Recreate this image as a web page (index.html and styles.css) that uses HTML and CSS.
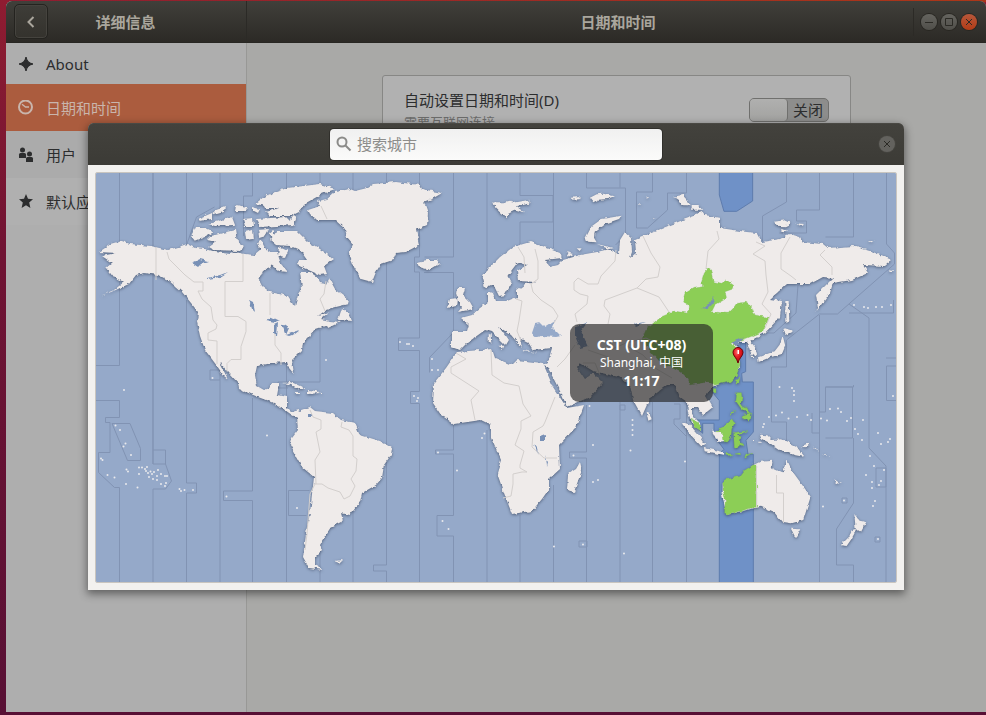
FILE: index.html
```html
<!DOCTYPE html>
<html lang="zh-CN">
<head>
<meta charset="utf-8">
<title>日期和时间</title>
<link rel="stylesheet" href="styles.css">
</head>
<body>
<main class="window">
  <aside class="side">
    <header class="bar side-bar">
      <button class="back" type="button" aria-label="返回"><svg width="12" height="14" viewBox="0 0 10 14"><path d="M7.500 2 2.500 7l5 5" fill="none" stroke="currentColor" stroke-width="2"/></svg></button>
      <h2>详细信息</h2>
    </header>
    <nav class="nav">
      <a href="#about"><svg viewBox="0 0 16 16"><path d="M8 1C9 5 11 7 15 8c-4 1-6 3-7 7-1-4-3-6-7-7 4-1 6-3 7-7z" fill="currentColor" stroke="currentColor"/></svg>About</a>
      <a href="#date" class="active"><svg viewBox="0 0 16 16"><circle cx="7.500" cy="7" r="6.500" fill="none" stroke="currentColor" stroke-width="2"/><path d="M4 4.300 7.500 7H11" fill="none" stroke="currentColor" stroke-width="1.400"/></svg>日期和时间</a>
      <a href="#users"><svg viewBox="0 0 16 16"><g fill="currentColor"><circle cx="4.500" cy="3" r="2.500"/><path d="M1 7.500q0-1.500 1.500-1.500h4Q8 6 8 7.500V11H1z"/><circle cx="11.500" cy="7" r="2.500"/><path d="M8 11.500Q8 10 9.500 10h4q1.500 0 1.500 1.500V15H8z"/></g></svg>用户</a>
      <a href="#apps"><svg viewBox="0 0 16 16"><path d="m8 0 2 4.800 5 .4-3.800 3.300L12.400 14 8 11.200 3.600 14l1.200-5.500L1 5.200l5-.4z" fill="currentColor"/></svg>默认应用程序</a>
    </nav>
  </aside>
  <section class="content">
    <header class="bar main-bar">
      <h1>日期和时间</h1>
      <div class="controls">
        <button type="button" aria-label="最小化"><svg viewBox="0 0 16 16"><path d="M4 8.500h8"/></svg></button>
        <button type="button" aria-label="最大化"><svg viewBox="0 0 16 16"><path d="M4.500 4.500h7v7h-7z"/></svg></button>
        <button type="button" class="red" aria-label="关闭窗口"><svg viewBox="0 0 16 16"><path d="m5 5 6 6m0-6-6 6"/></svg></button>
      </div>
    </header>
    <div class="card">
      <div><p class="label">自动设置日期和时间(D)</p><p class="hint">需要互联网连接</p></div>
      <button class="switch" type="button" role="switch" aria-checked="false"><span class="knob"></span><span class="state">关闭</span></button>
    </div>
  </section>
</main>

<div class="overlay">
<div class="dialog" role="dialog" aria-label="时区">
  <header class="dialog-bar">
    <label class="search"><svg width="16" height="16" viewBox="0 0 16 16"><circle cx="6" cy="6" r="4.500"/><path d="m9.500 9.500 5 5"/></svg><input type="text" placeholder="搜索城市" aria-label="搜索城市"></label>
    <button class="close" type="button" aria-label="关闭"><svg viewBox="0 0 16 16"><path d="m5 5 6 6m0-6-6 6"/></svg></button>
  </header>
  <div class="dialog-body">
  <div class="map">
<svg viewBox="96 173 800 409" role="img" aria-label="世界时区地图">
<defs>
  <filter id="coast" x="96" y="173" width="800" height="409" filterUnits="userSpaceOnUse" color-interpolation-filters="sRGB">
    <feTurbulence type="fractalNoise" baseFrequency=".2" numOctaves="2" seed="4" result="n"/>
    <feDisplacementMap in="SourceGraphic" in2="n" scale="4" xChannelSelector="R" yChannelSelector="G" result="d"/>
    <feDropShadow in="d" dx="0" dy="1" stdDeviation="1.800" flood-color="#34415a" flood-opacity=".7"/>
  </filter>
  <radialGradient id="pin" cx=".4" cy=".3" r=".8"><stop offset="0" stop-color="#ff6a6a"/><stop offset=".4" stop-color="#e31b22"/><stop offset="1" stop-color="#a40008"/></radialGradient>
</defs>
<rect class="sea" x="96" y="173" width="800" height="409"/>
<!-- highlighted zone -->
<g transform="translate(560 165) scale(.3333)" class="zone"><path d="M478 22V90l14 49h38l48-31V22z"/></g>
<g transform="translate(600 310) scale(.3333)" class="zone"><path d="M395 90h42v95l-12 5 2 26h33v150l-22 25 6 42h16v387H358V432l14-14-30-40v-38h-34v30l-40-40h90v-58l-18-22v-30l55-50z"/></g>
<!-- zone boundaries over water -->
<g class="lines">
  <path d="M119.500 173v192.500H96M96 400.500h23.500v17h-14v5h4.500v30H98.500v20l16 15h5V582M112 423.500h18l10.500 25v12h-13zM153 173v277h12.500v14H153zM153 464v-14M165.500 464l6 17-6 8H153v93M186.500 173v72l10-28 18-10M186.500 300v183h10v10h-10v89M220 173v38M210 370h10v212M210 370v10h10M252.500 173v23h-9v40M252.500 398v93h-29v9.500h29V582M286.500 173v24M286.500 360v222M320 173v10M320 330v52h-42v6h10M320 545v37M353 173v20M353 250v262V582M386.500 173v392h-13v6h13v11M419.500 173v84h-5v15h5v66h-21v12.500h21v41h-9v12h9V582M453.500 173v84h-29M424 272.500h29.500v60l-24 25v15M453.500 424v26h-18v4h18v61.500H437v20.500h16.500v46M487 173v110M487 430v152M520 173v22.500h33V222h-33v25M520 515v67M553.500 173v75M553.500 485v97M586.500 173v15h39v47l-10 10M586.500 405v47h-17v6h17V582M620 173v14.500M620 402v180M652.500 173v19h-16v36h11l20-18v-17h19v-20M652.500 402v180M686.500 402v180M620 405h5v5h-5zM674 404h6v15h-6v5l12 12M786.500 173v29l-24 14v25M819.500 173v37h-23v11h10v12h-27M853.500 173v64h-28M886.500 173v71l8 9v11l-57 50h-18l-33 26v27h-15v55h15v30M765 333h9l22-20 2-28M819.500 315v267M849 304l20 14v130l17 18v116M893.500 300v13H849M819.500 433v-21h6v-25h28v-2M819.500 433H812v-20M825.500 387h27v51h-27M886 358h10M853.500 438v65l-17 26v36h17v17M876 468h10v19h-10zM288.500 490.500h21M288.500 490.500v25h18"/>
  <path d="M579 541h8v6h-8zM842 498h5v5h-5zM875 537h5v5h-5zM896 366h-9.500v34.500h9.500"/>
</g>
<g filter="url(#coast)">
<g class="land">
  <!-- North and Central America -->
  <path d="M99 252l6-4 6-4 11-3 8 3 21 2 17 4 10-3 9-3 8 4 10 1 10 3 15 2 5-2 10 2 10 1 6-5-3-7 3-3 4 8 8 6 2 6-5 8-7 3-4 9 3 6 8 6 18 4 4 6 3 4 3-11 4-6-2-17 10 0 7 5 3 6 6 1 3-6 6 11 8 6 6 5-1 4-12 3-10 3-8 6 11-4-8 7 9 2 10 1-12 6-3-2-9 3-7 8-6 6-1 7-10 10 2 14-5-6-2-6-16 1-14 3-2 9 2 11 7 4 6-2 2-5 7 0-2 12 10 2v10l5 5 7-2 3 6-3 3-7-4-10-7-11-6-13-5-19-8-1-6-19-21 9 17-4-3-7-10-12-16-5-14-3-14 1-10-7-9-9-11-14-12-10-5-14-2-8 2-7 9-18 8-11 4 14-6 10-8-11-5-7-9 6-5-10-7 14-3z"/>
  <!-- Arctic archipelago -->
  <path d="M335 189l-13 5-16 9-8 9-8 4h-20l-4-4 13-4-24-4 10-8 22-8 33-4zM195 228h11l8 4-9 5-10 4-4-5zM211 236l16-4 9-2 2 12 7 5-4 4-27-1-5-3 7-5-9-2zM198 219l14-6v6l-12 2zM208 224l14-4 10-3 3 8-20 1zM216 210l9-3-1 4-14 4zM236 206l12 2-3 3-10 0zM252 207l8 2-2 4-6-3zM243 219l10-1 1 8-9 0zM245 232l8-2 1 9-8 1zM256 219l30-2 8 8-34 2zM292 216l5 1-3 7-5-1zM258 230l11-1-3 6-7 2zM270 233l4-3v13l-2-2zM277 231h20l10 10 13 8 14 10-10 7 3 8-7 1-14-6-9-4 2-5h8l-7-10-10-4-14-1-6-5zM279 247l9 4-3 7-7-2zM270 252l7 0 4 12 7 8-9-1-8-6-6-7zM300 196l24-5-15 8zM262 202l20 0 3 6-20 0z"/>
  <!-- Greenland and the North Atlantic -->
  <path d="M335 192l15-3 5 2 12-3 6-4 23-2 24 3 2 4 20 4-10 6-8 3 4 11-1 12-11 5 3 15-13 7-10 1-3 7-12 4-5 8-4 10-11-3-7-12-5-13 4-10-6-7-2-8-10-9h-18l-7-6-2-4 12-4-3-5 10-2zM342 308l7 6 3 7-14-1zM417 262l10-2h10l3 4-10 6-11-3zM457 288l8 0-2 7 7 7 4 7-16 3 4-5-4-6-2-7zM450 299l7-1-1 8-8 2z"/>
  <!-- Cuba, Hispaniola -->
  <path d="M283 383l8-1 9 4 6 3-6 0-9-4zM308 390l8 1 4 2-12 1zM296 392h5v2h-5zM320 393h4v1h-4z"/>
  <!-- South America -->
  <path d="M297 417l4-7 9-3 5 4 18 2 8 7 14 3 5 12 20 6 12 7-1 7-7 10-2 13-6 7-14 8-2 9-10 13-9-2 2 8-12 6-6 9-5 8 2 6-7 7v8l9 5-15-2-6-11 3-24 4-20 4-36-12-10-12-22 2-7 6-8z"/>
  <path d="M334 561l8-1-3 3z"/>
  <!-- Eurasia -->
  <path d="M451 332L467 332 469 325 461 318 472 315 480 308 488 302 488 291 493 293 496 301 507 301 517 297 517 290 525 284 536 282 518 281 517 271 527 265 518 262 508 275 512 283 505 295 499 296 493 284 485 288 482 278 485 272 500 257 513 247 530 242 547 248 560 253 562 258 545 260 550 267 558 265 563 260 570 258 580 255 597 252 613 248 597 244 613 251 619 253 620 240 625 232 631 237 632 252 630 258 636 253 635 240 642 237 663 228 683 220 700 214 720 218 720 228 747 232 757 233 762 242 780 239 790 234 800 237 803 242 823 244 828 248 853 246 873 252 892 260 885 266 863 265 868 273 852 280 833 283 830 293 818 309 816 295 833 278 823 277 810 284 787 284 770 299 782 301 780 317 765 333 750 341 755 347 757 354 752 356 747 342 732 342 737 347 740 362 740 368 732 378 713 387 706 395 713 407 703 415 697 407 692 407 692 415 700 423 701 431 693 425 688 413 687 402 680 397 675 385 667 385 650 398 642 416 633 400 630 385 619 377 610 375 593 371 580 363 577 367 585 379 593 373 603 383 590 397 567 407 562 395 548 368 542 365 548 362 552 348 533 350 528 342 520 338 522 348 511 335 499 327 508 340 505 345 492 332 485 330 467 343 460 350 451 347z"/>
  <!-- Africa -->
  <path d="M457 352l35-3 3 9 17 7 5-5 26 3 10 24 14 21 17-3-8 22-17 18 1 24-11 10v10l-7 10-10 12-20 3-8-21-7-20 4-13-10-23v-12l-10-5-27 4-13-9-8-12 1-20 12-15zM580 462l2 8-8 22-7-2 1-16 8-5z"/>
</g>
<g transform="translate(430 165) scale(.3333)" class="land">
  <path d="M190 112l30 0 20-5 20 5 38-8v12l-40 8 25 18-30-8-15 8-8 18-22-20-12-12zM422 98l20-2 12 6-28 2zM480 98l20-10 20-2 35 8-20 8-30 2-15 8zM465 222l20-38 30-22 60-10-8 10-45 16-28 22-2 18 8 14-25-2zM205 542l18 0-4 10zM176 508l6 0 2 30-8-4zM275 555l50 8-46-4zM440 250l15 0-6 8zM410 262l20 5-14 8z"/>
</g>
<g transform="translate(560 165) scale(.3333)" class="land">
  <path d="M340 95l30-6 12 14 10 18-25 0-10-14zM395 120l20 0 15 14-35 0zM405 148l20-8 8 12-30 10zM235 115h4v4h-4zM260 94h6v3h-6zM280 158h6v3h-6zM248 210l20 0-8 20-8-6z"/>
</g>
<g transform="translate(720 165) scale(.3333)" class="land">
  <path d="M165 170l30-4 20 8-20 10-25-2zM225 175l28 2-10 6zM185 192l20 8-15 2zM440 226l24 0-10 6zM196 408l10 0 2 60-12 6zM190 488l30 10-24 12zM188 512l8 30-10 25-35 10-35 14-2-14 50-18 15-20zM95 575h4v4h-4zM505 316l16 2v3h-12zM300 425l-16 20 8-14z"/>
</g>
<g transform="translate(600 310) scale(.3333)" class="land">
  <path d="M242 335l25 8 35 38 14 22-12 6-34-36zM312 414l60 12v8l-58-10zM336 362l24 0 22 10 0 20-30 4zM140 308l10 4 5 16-10 4zM480 374l22 2 14 14 30-2 40 20 25 32-25-4-20-10-18 0-40-28-24-12zM600 410l25-10 6-2-10 14zM365 520l55-20 40-35 20-10 38-3-3 23 33 15 12-43 18 38 22 30 32 45-22 70-35 10-30-5-20-25-45-20-40 10-60 15-15-65zM573 656l28 2-14 26zM763 612l16 20 20 4-16 30-16-10-2-22zM770 658l-16 30-14 20-18-2 24-24 12-24zM703 508l20 14-16-4zM640 410l18 12-12-4zM670 430l20 14-14-6zM452 390h10v3h-10zM475 395h10v3h-10z"/>
</g>
<!-- zones in green -->
<g transform="translate(560 165) scale(.3333)" class="green">
  <path d="M445 308l10 7 7 35 23 5 15-10 22 17-4 10-23 8 5 20-35 20-10 20 50 5 15-15 10-15 25-3 20 13 10 25 43 8-13 22-7 20-48 20-45 15 15 15 10 50-10 30-20 20-45 10-20-10-55 10-10-20-20-20-60-30-35-40-20-25 15-35 20-15 25-20 40-17 40 7v-25l-17-12 7-23 25-15 28-5-3-15 10-32z"/>
</g>
<g transform="translate(600 310) scale(.3333)" class="green">
  <path d="M365 520l8-10 47-12 12-16 28-17 10 0v125l-30 8-60 17-6-10 2-35zM276 328l14 6 12 14 0 14-18-12zM345 365l22-10 28-26 8 12-8 16-2 20-10 22-10 0-4-28-12-6zM401 368l42-6-30 14 14 6-10 8 14 18-12-4-4 10-12-4zM410 248l14 0 2 18-4 18 12 6 16 20-10-2-16-12-16-22zM428 316l24-8-4 26-22-10zM392 314l16-16-12 18zM410 208l10-8-4 22-8 0zM340 236h8v12h-8zM375 429l25 5-20 3zM405 432l15-4 2 6zM430 438l26-9-20 12z"/>
</g>
<!-- inland water -->
<g class="water">
  <path d="M192 263l8-4 8 2-6 2-4 4zM208 278l12-3 8-3-8 5-12 2zM249 300l4 2 2 10-3-3zM265 321l7-4 8 4-5 2zM274 325l4-2-1 14-3-4zM281 323l8 5-3 7-2-5zM286 335l14-5-5 4-6 2zM308 414h3v3h-3zM634 324l12-2-10 4zM540 437l5-2 0 5-5 0zM534 444l3 4 2 8zM546 455l1 12 1-4zM575 326l12-3-6 8 7 15-8 2-5-12zM701 308l9-5 4-7 0 5-7 8zM732 343l6-4 6-2-5 5 1 4z"/>
  <path class="sea" d="M532 333l3-9 5-1 4 4 8-5 3-2-3 7 9 9-5 1-14-1-8 2z"/>
</g>
</g>
<!-- zone borders over land -->
<g class="borders">
  <path d="M156 247v33M167 252l2 7 8 8 8 8 9 7h9v9h-5l4 8 9 8 2 13 4 5-1 4-8 4v7l9 1v23M243 254v27.500H225v35h13l8 5 0 10-5 15v13h-10l-4 4v8M275 334l0 11 6 8v12M270 293v22M321 206l6 13M326 281l-2 13-4 5 5 12"/>
  <path d="M310 410l3 7 8 3v9l-5 3 4 20-5 8 1 24M342 422l-1 5 8 3 4 6v20l4 3-1 12-5 8 4 7-5 10-6 3-4-7-12-4-6-4-7 0-5 10-3 40-2 16"/>
  <path d="M518 247l6 10 1 16M535 249l3 12v18l-7 5 2 8 8 8 12 8 5 8-4 7M516 299l6 2-3 20-2 10 4 10M616 250l-1 11-14 15-3 8-10 0-10-6-4 4 0 8 6 4 8 2-1 8-12 10 2 8M643 236l8 17 9 14-2 10-12 2-9 9-32 12-1 6 6 8-2 10M637 288l22 9 10 15M717 231l2 8-11 12-2 18M756 242l9 4-12 8 12 7 1 14 2 17-6 12 9 10-6 14M790 237l-9 16v16l10 7 5 4M825 250l-5 5 12 12v8M456 353l10 6-15 8 0 6 28 18-8 9 4 20M491 350l1 25 12 8 15 3 4 18 8 12-10 5v8l-6 16 9 6-4 14v3l7 4-5 0-9 2v10l-2 12-8 2M555 397l-10 25-2 4-10 6-1 15 12 11h13M776.500 475v18h7v30M756.500 466v41M600 375l-5-12-12 0M610 350l16-7 20-5 16 8M575 345l-10 14-8 8M588 350l20 7 12 12M625 345l18 10 12 13 17 10"/>
</g>
<!-- scattered islands -->
<path class="dots" d="M124 390h0M115.500 425.500h0M120 430h0M125.500 443.500h0M123.500 446.500h0M131 455h0M101 458.500h0M102.500 460h0M107.500 475h0M114.500 477.500h0M126 484h0M126.500 469.500h0M128 471.500h0M137.500 487.500h0M139 467.500h0M142 467.500h0M145 469h0M147 467h0M146 471h0M148 473h0M150.500 471.500h0M152 474h0M154 472h0M149 477h0M153 479h0M157 476h0M158 470h0M161 474h0M157 480h0M161 484h0M165 476h0M167 476h0M166 483h0M165 486h0M179.500 489h0M181 491h0M184.500 490h0M193 490h0M139 474h0M226.500 496.500h0M267 435.500h0M212.500 378h0M326 360h0M400 342h0M407 344h0M409 344h0M413 346h0M432 359h0M432 370h0M438 370h0M414 396h0M418 398h0M417 401h0M438 452.500h0M457 470.500h0M482 438h0M484.500 433.500h0M442.500 521h0M448.500 529h0M554 546.500h0M583 544.500h0M573.500 455.500h0M593 445h0M593 482h0M598 480h0M589.500 406h0M632.500 420h0M632.500 425h0M632.500 430h0M632.500 435h0M630.500 450.500h0M685 461.500h0M624 553.500h0M779.500 387h0M792 388h0M794 391h0M794 395h0M794 401h0M769 417h0M776 415.500h0M782 412.500h0M788.500 418.500h0M797 417h0M807.500 415h0M811 420h0M821 418.500h0M827 420.500h0M764 424h0M763 427h0M830 409h0M838 408.500h0M841 412h0M847 421h0M851 418h0M863 420h0M855 429h0M858 434h0M862 440h0M878 433h0M881 444h0M888 442h0M890 439h0M870 456h0M874 466h0M866 475h0M872 482h0M872 488h0M884 470h0M881 481h0M879 485h0M875 501h0M873 506h0M844 500.500h0M878 539h0M823 506.500h0M893 396h0M297 508h0M854 305h0M864 307h0M868 308h0M876 307h0M882 307h0M891 305h0"/>
<path class="pin" d="M738 363c-1-5-5-7-5-10.500a5 5 0 0 1 10 0c0 3.500-4 5.500-5 10.500z" fill="url(#pin)"/><path d="M737.500 350h1.500v4h-1.500z" fill="#fff"/>
</svg>
    <div class="tip"><strong>CST (UTC+08)</strong><span>Shanghai, 中国</span><strong>11:17</strong></div>
  </div>
  </div>
</div>
</div>
</body>
</html>
```

FILE: styles.css
```css
* { box-sizing: border-box; }
body {
  margin: 0;
  min-height: 100vh;
  display: flex;
  padding: 1px 0 3px 6px;
  overflow: hidden;
  background: linear-gradient(90deg, rgba(172, 55, 24, 0), #ac3718) top / 100% 2px no-repeat,
    linear-gradient(#8f1c31, #701333 35%, #581035);
  font: 15px/20px "Noto Sans", "Noto Sans CJK SC", sans-serif;
  color: #2c2d2e;
}
h1, h2, p { margin: 0; font-size: 15px; line-height: 20px; }
button { padding: 0; font: inherit; color: inherit; }
.window { flex: 1; display: flex; border-radius: 6px 6px 0 0; overflow: hidden; background: #a9a9a7; }
.side { width: 241px; background: #aeaeae; border-right: 1px solid #989896; }
.content { flex: 1; min-width: 0; }
.bar {
  height: 42px;
  display: flex;
  align-items: center;
  background: linear-gradient(#403f3a, #2c2a26);
  color: #aaa69d;
  border-bottom: 1px solid #282723;
}
.side-bar { padding-left: 8px; margin-right: -1px; border-right: 1px solid #2b2a26; }
.side-bar h2 { flex: 1; padding-right: 43px; text-align: center; }
.back {
  width: 34px;
  height: 35px;
  display: grid;
  place-items: center;
  border: 1px solid #24231f;
  border-radius: 5px;
  background: linear-gradient(#3e3d38, #34322d);
  box-shadow: inset 0 0 0 1px #45433e;
}
.main-bar { padding-right: 9px; }
.main-bar h1 { flex: 1; text-align: center; padding-left: 76px; }
.controls { display: flex; gap: 4px; border-left: 1px solid #2c2a26; padding-left: 7px; height: 28px; align-items: center; }
.controls button, .close {
  width: 16px;
  height: 16px;
  border: 0;
  border-radius: 50%;
  background: linear-gradient(#65645f, #504f4a);
  box-shadow: 0 0 0 1px #282722;
}
.controls svg, .close svg { display: block; width: 16px; height: 16px; fill: none; stroke: #2b2a25; stroke-width: 1; }
.controls .red { background: linear-gradient(#b6573a, #b23c17); }

.nav { display: flex; flex-direction: column; }
.nav a { display: flex; align-items: center; gap: 12px; height: 47px; padding-left: 12px; color: inherit; text-decoration: none; }
.nav a:first-child { height: 41px; }
.nav a:nth-child(3) { background: #ababab; }
.nav a:nth-child(4) { background: #b0b0b0; }
.nav .active { background: #ab5c3e; color: #c9b5ac; }
.nav svg { width: 16px; height: 16px; flex: none; }

.card {
  width: 469px;
  max-width: 90%;
  height: 120px;
  margin: 32px auto 0;
  padding: 14px 21px;
  display: flex;
  justify-content: space-between;
  border: 1px solid #878785;
  border-radius: 3px;
  background: #b1b1b1;
}
.label { padding-bottom: 2px; }
.hint { font-size: 13px; color: #6c6c6b; }
.switch {
  width: 80px;
  height: 24px;
  margin-top: 8px;
  display: flex;
  border: 1px solid #70706e;
  border-radius: 5px;
  background: #8d8d8c;
  line-height: 22px;
}
.knob { width: 38px; height: 22px; border-right: 1px solid #70706e; border-radius: 4px; background: linear-gradient(#b0b0af, #a2a2a0); }
.state { flex: 1; text-align: center; }

.overlay { position: absolute; inset: 1px 0 3px 6px; display: grid; place-items: center; }
.dialog {
  width: 816px;
  max-width: 100%;
  border-radius: 6px 6px 0 0;
  background: #f2f1ef;
  box-shadow: 0 3px 9px 1px rgba(0, 0, 0, .45);
}
.dialog-bar {
  height: 42px;
  padding: 0 9px 0 25px;
  display: flex;
  align-items: center;
  border-radius: 6px 6px 0 0;
  background: linear-gradient(#43423d, #3c3b36);
  box-shadow: inset 0 1px #4a4944;
}
.search {
  width: 332px;
  height: 31px;
  margin: 0 auto;
  padding-left: 6px;
  display: flex;
  align-items: center;
  gap: 5px;
  border-radius: 4px;
  background: linear-gradient(#f0f0f0, #fbfbfa);
  box-shadow: 0 0 0 1px #302f2b;
}
.search svg { fill: none; stroke: #8b8b89; stroke-width: 2; }
.search input { flex: 1; min-width: 0; border: 0; padding: 0; outline: 0; background: none; font: inherit; }
.search input::placeholder { color: #8d8d8b; opacity: 1; }
.close { background: #63625e; box-shadow: 0 0 0 1px #45443f; }
.dialog-body { padding: 7px; }
.map { position: relative; border: 1px solid #c9c5bf; border-radius: 2px; overflow: hidden; aspect-ratio: 802 / 411; }
.map > svg { display: block; width: 100%; height: 100%; }
.water { fill: #7890b6; }
.sea { fill: #95a9c9; }
.zone { fill: #6f91c7; stroke: #5d7bad; stroke-width: 3; }
.lines { fill: none; stroke: #8193b3; stroke-width: 1; }
.land { fill: #efebea; }
.green { fill: #8cce56; stroke: #7db55c; stroke-width: 1; }
.borders { fill: none; stroke: #d3cfcd; stroke-width: 1; stroke-linejoin: round; }
.dots { fill: none; stroke: #e9e9ec; stroke-width: 2; stroke-linecap: round; }
.pin { stroke: #6d0005; stroke-width: 1; }
.tip {
  position: absolute;
  left: 59.25%;
  top: 36.9%;
  width: 143px;
  height: 78px;
  padding-top: 12px;
  display: flex;
  flex-direction: column;
  align-items: center;
  border-radius: 9px;
  background: rgba(36, 35, 35, .65);
  color: #fff;
  font-size: 14px;
  line-height: 18px;
}
.tip span { font-size: 12px; }
```
